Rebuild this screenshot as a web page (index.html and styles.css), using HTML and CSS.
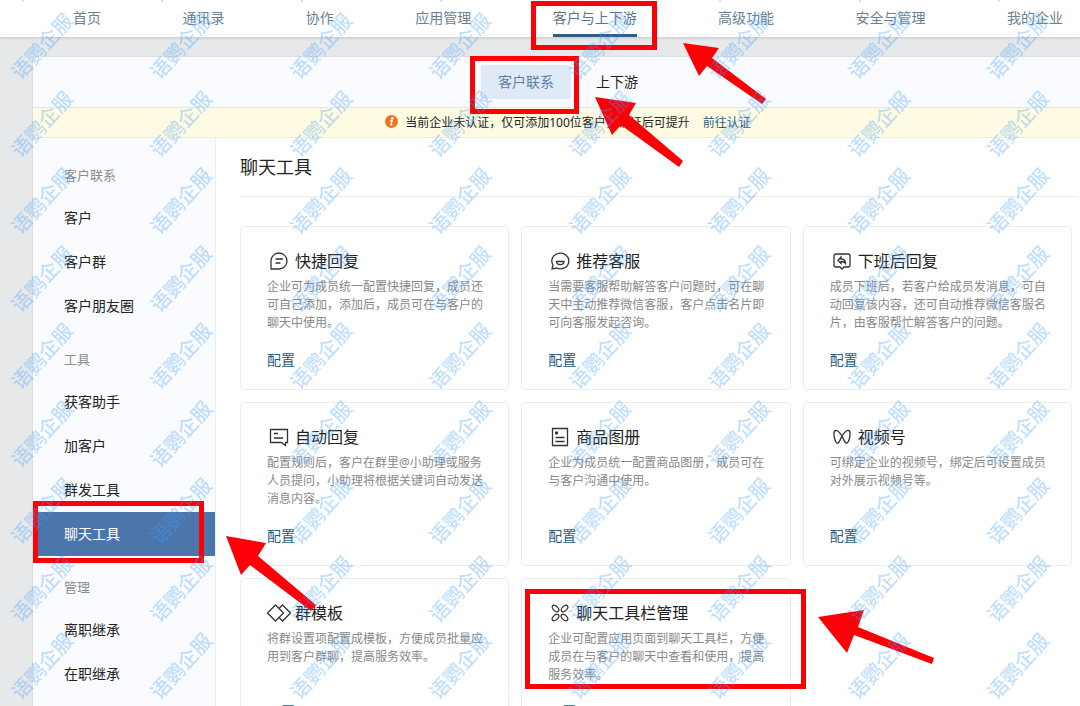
FILE: index.html
```html
<!DOCTYPE html>
<html lang="zh-CN">
<head>
    <meta charset="UTF-8">
    <meta name="viewport" content="width=device-width, initial-scale=1.0">
    <title>聊天工具</title>
    <link rel="stylesheet" href="styles.css">
</head>
<body>
    <nav class="topnav">
        <a href="#">首页</a>
        <a href="#">通讯录</a>
        <a href="#">协作</a>
        <a href="#">应用管理</a>
        <a href="#" class="active">客户与上下游</a>
        <a href="#">高级功能</a>
        <a href="#">安全与管理</a>
        <a href="#">我的企业</a>
    </nav>

    <div class="panel">
        <div class="tabs">
            <button type="button" class="tab active">客户联系</button>
            <button type="button" class="tab">上下游</button>
        </div>
        <div class="notice">
            <svg width="13" height="13" viewBox="0 0 13 13">
                <circle cx="6.5" cy="6.5" r="6.5" fill="#ee7420"/>
                <circle cx="7.3" cy="3.3" r="1.2" fill="#fff"/>
                <path d="M5 5.6h2l-1 4.2h1.3" fill="none" stroke="#fff" stroke-width="1.5"/>
            </svg>
            <span>当前企业未认证，仅可添加100位客户，认证后可提升</span>
            <a href="#">前往认证</a>
        </div>

        <div class="body">
            <aside class="sidebar">
                <h3>客户联系</h3>
                <a href="#">客户</a>
                <a href="#">客户群</a>
                <a href="#">客户朋友圈</a>
                <h3>工具</h3>
                <a href="#">获客助手</a>
                <a href="#">加客户</a>
                <a href="#">群发工具</a>
                <a href="#" class="active">聊天工具</a>
                <h3>管理</h3>
                <a href="#">离职继承</a>
                <a href="#">在职继承</a>
            </aside>

            <main class="main">
                <h1>聊天工具</h1>
                <div class="cards">
                    <div class="card">
                        <h2>
                            <svg class="icon" viewBox="0 0 24 24"><path d="M4 20V12a8 8 0 1 1 8 8zM8.500 10h7.500M8.500 14h5"/></svg>
                            快捷回复
                        </h2>
                        <p>企业可为成员统一配置快捷回复，成员还可自己添加，添加后，成员可在与客户的聊天中使用。</p>
                        <a href="#">配置</a>
                    </div>
                    <div class="card">
                        <h2>
                            <svg class="icon" viewBox="0 0 24 24"><path d="M4 20l1-4A8.500 7.800 0 1 1 8.500 19zM8.500 12.500h7.500a3.700 3 0 0 1-7.500 0z"/></svg>
                            推荐客服
                        </h2>
                        <p>当需要客服帮助解答客户问题时，可在聊天中主动推荐微信客服，客户点击名片即可向客服发起咨询。</p>
                        <a href="#">配置</a>
                    </div>
                    <div class="card">
                        <h2>
                            <svg class="icon" viewBox="0 0 24 24"><path d="M6 5h12a2 2 0 0 1 2 2v9a2 2 0 0 1-2 2h-4l-2 2-2-2H6a2 2 0 0 1-2-2V7a2 2 0 0 1 2-2zM11 8l-3 3.500 3 3v-2c2 0 3.500.5 4.500 2 0-3-1.500-4.500-4.500-4.500z"/></svg>
                            下班后回复
                        </h2>
                        <p>成员下班后，若客户给成员发消息，可自动回复该内容，还可自动推荐微信客服名片，由客服帮忙解答客户的问题。</p>
                        <a href="#">配置</a>
                    </div>
                    <div class="card">
                        <h2>
                            <svg class="icon" viewBox="0 0 24 24"><path d="M3.500 4.500h17v13h-2v3l-4-3h-11zM7 8.500h4M7 13h9"/></svg>
                            自动回复
                        </h2>
                        <p>配置规则后，客户在群里@小助理或服务人员提问，小助理将根据关键词自动发送消息内容。</p>
                        <a href="#">配置</a>
                    </div>
                    <div class="card">
                        <h2>
                            <svg class="icon" viewBox="0 0 24 24"><path d="M4.500 3.500h15v17h-15zM7.500 12.500h9M7.500 16.500h9"/><circle cx="8.500" cy="8" r="1" fill="#333"/></svg>
                            商品图册
                        </h2>
                        <p>企业为成员统一配置商品图册，成员可在与客户沟通中使用。</p>
                        <a href="#">配置</a>
                    </div>
                    <div class="card">
                        <h2>
                            <svg class="icon" viewBox="0 0 24 24"><path d="M12 11C10 8 8 5 5.500 5.500 3 6 4 12 5 15c1 3 2.500 4 4 2 1-1.500 2-4 3-6zM12 11c2-3 4-6 6.500-5.500C21 6 20 12 19 15c-1 3-2.500 4-4 2-1-1.500-2-4-3-6z"/></svg>
                            视频号
                        </h2>
                        <p>可绑定企业的视频号，绑定后可设置成员对外展示视频号等。</p>
                        <a href="#">配置</a>
                    </div>
                    <div class="card">
                        <h2>
                            <svg class="icon" viewBox="0 0 24 24"><path d="M8.500 4l8 8-8 8-8-8zM12 7.500L15.500 4l8 8-8 8-3.500-3.500"/></svg>
                            群模板
                        </h2>
                        <p>将群设置项配置成模板，方便成员批量应用到客户群聊，提高服务效率。</p>
                        <a href="#">配置</a>
                    </div>
                    <div class="card">
                        <h2>
                            <svg class="icon" viewBox="0 0 24 24">
                                <ellipse cx="7.500" cy="7.500" rx="4" ry="2.300" transform="rotate(45 7.500 7.500)"/>
                                <ellipse cx="16.500" cy="7.500" rx="4" ry="2.300" transform="rotate(-45 16.500 7.500)"/>
                                <ellipse cx="7.500" cy="16.500" rx="4" ry="2.300" transform="rotate(-45 7.500 16.500)"/>
                                <ellipse cx="16.500" cy="16.500" rx="4" ry="2.300" transform="rotate(45 16.500 16.500)"/>
                            </svg>
                            聊天工具栏管理
                        </h2>
                        <p>企业可配置应用页面到聊天工具栏，方便成员在与客户的聊天中查看和使用，提高服务效率。</p>
                        <a href="#">配置</a>
                    </div>
                </div>
            </main>
        </div>
    </div>

    <!-- red guide marks -->
    <svg class="overlay marks">
        <g fill="none" stroke="#fb0007" stroke-width="5">
            <rect x="533.500" y="3.500" width="121" height="44"/>
            <rect x="472.500" y="58.500" width="104" height="53"/>
            <rect x="35.500" y="503.500" width="166" height="57"/>
            <rect x="527.500" y="591.500" width="276" height="95"/>
        </g>
        <g fill="#fb0007">
            <path d="M683 43L719 48 712 58 766 99 762 104 707 66 699 76z"/>
            <path d="M595 97L636 103 629 115 683 161 679 167 621 125 612 135z"/>
            <path d="M226 536L266 543 258 556 316 605 311 611 250 565 241 575z"/>
            <path d="M818 617L864 610 858 627 934 658 932 664 854 635 847 653z"/>
        </g>
    </svg>

    <!-- watermark -->
    <svg class="overlay watermark" aria-hidden="true">
        <defs>
            <pattern id="wm" width="279" height="155" patternUnits="userSpaceOnUse" x="-28" y="-70">
                <text transform="translate(70 39) rotate(-48)">语鹦企服</text>
                <text transform="translate(209 39) rotate(-48)">语鹦企服</text>
                <text transform="translate(70 116) rotate(-48)">语鹦企服</text>
                <text transform="translate(209 116) rotate(-48)">语鹦企服</text>
            </pattern>
        </defs>
        <rect width="100%" height="100%" fill="url(#wm)"/>
    </svg>
</body>
</html>
```
FILE: styles.css
```css
* {
    box-sizing: border-box;
}
body {
    margin: 0;
    height: 100vh;
    display: flex;
    flex-direction: column;
    position: relative;
    overflow: hidden;
    background: #e7e8ea;
    color: #222;
    font-family: "Noto Sans", "Noto Sans CJK SC", sans-serif;
    font-size: 14px;
}
a {
    color: #2b5c7d;
    text-decoration: none;
}
h1, h2, h3, p {
    margin: 0;
    font-weight: 400;
}

/* top nav */
.topnav {
    display: flex;
    justify-content: space-between;
    flex-shrink: 0;
    height: 37px;
    padding: 0 17px 0 73px;
    background: #fff;
    box-shadow: 0 1px 3px rgba(0, 0, 0, 0.15);
}
.topnav a {
    line-height: 36px;
    color: #6b7f92;
}
.topnav a.active {
    color: #5c7590;
    border-bottom: 3px solid #355c84;
}

/* panel */
.panel {
    flex: 1;
    display: flex;
    flex-direction: column;
    margin: 20px 0 0 33px;
    background: #fafbfe;
    box-shadow: 0 0 2px rgba(0, 0, 0, 0.12);
}
.tabs {
    display: flex;
    justify-content: center;
    gap: 8px;
    padding: 8px 0 8px 23px;
    border-bottom: 1px solid #e6e7e4;
}
.tab {
    height: 34px;
    padding: 0 17px 2px;
    border: 0;
    border-radius: 3px;
    background: none;
    color: #222;
    font: inherit;
    cursor: pointer;
}
.tab.active {
    background: #dfe9f8;
    color: #5f7ea3;
}
.notice {
    display: flex;
    justify-content: center;
    align-items: center;
    height: 30px;
    padding: 0 0 2px 23px;
    background: #fffae2;
    border-bottom: 1px solid #ecece6;
    font-size: 12px;
}
.notice span {
    margin: 0 13px 0 7px;
}

/* sidebar */
.body {
    flex: 1;
    display: flex;
}
.sidebar {
    width: 183px;
    padding-top: 16px;
    border-right: 1px solid #eceef0;
}
.sidebar h3 {
    padding-left: 31px;
    font-size: 13px;
    line-height: 42px;
    color: #8b8d90;
}
.sidebar a {
    display: block;
    padding-left: 31px;
    line-height: 44px;
    color: #222;
}
.sidebar a + h3 {
    margin-top: 10px;
}
.sidebar a.active {
    background: #4c76ab;
    color: #fff;
}

/* content */
.main {
    flex: 1;
    padding: 0 2px 0 24px;
    background: #fff;
}
.main h1 {
    padding: 13px 0;
    border-bottom: 1px solid #ececec;
    font-size: 18px;
    line-height: 32px;
}
.cards {
    display: grid;
    grid-template-columns: repeat(3, 1fr);
    gap: 12px;
    margin: 29px 6px 0 0;
}
.card {
    padding: 22px 25px 19px 26px;
    border: 1px solid #ececec;
    border-radius: 4px;
}
.card h2 {
    display: flex;
    align-items: center;
    gap: 4px;
    font-size: 16px;
    line-height: 24px;
}
.card p {
    min-height: 54px;
    margin: 5px 0 18px;
    font-size: 12px;
    line-height: 18px;
    color: #888;
}
.card a {
    display: block;
    line-height: 20px;
}
.icon {
    width: 24px;
    height: 24px;
    fill: none;
    stroke: #333;
    stroke-width: 1.3;
}

.overlay {
    position: absolute;
    top: 0;
    left: 0;
    width: 100%;
    height: 100%;
    pointer-events: none;
}
.watermark text {
    font-size: 20px;
    font-weight: 500;
    fill: rgba(64, 158, 255, 0.33);
    text-anchor: middle;
    dominant-baseline: central;
}
```
